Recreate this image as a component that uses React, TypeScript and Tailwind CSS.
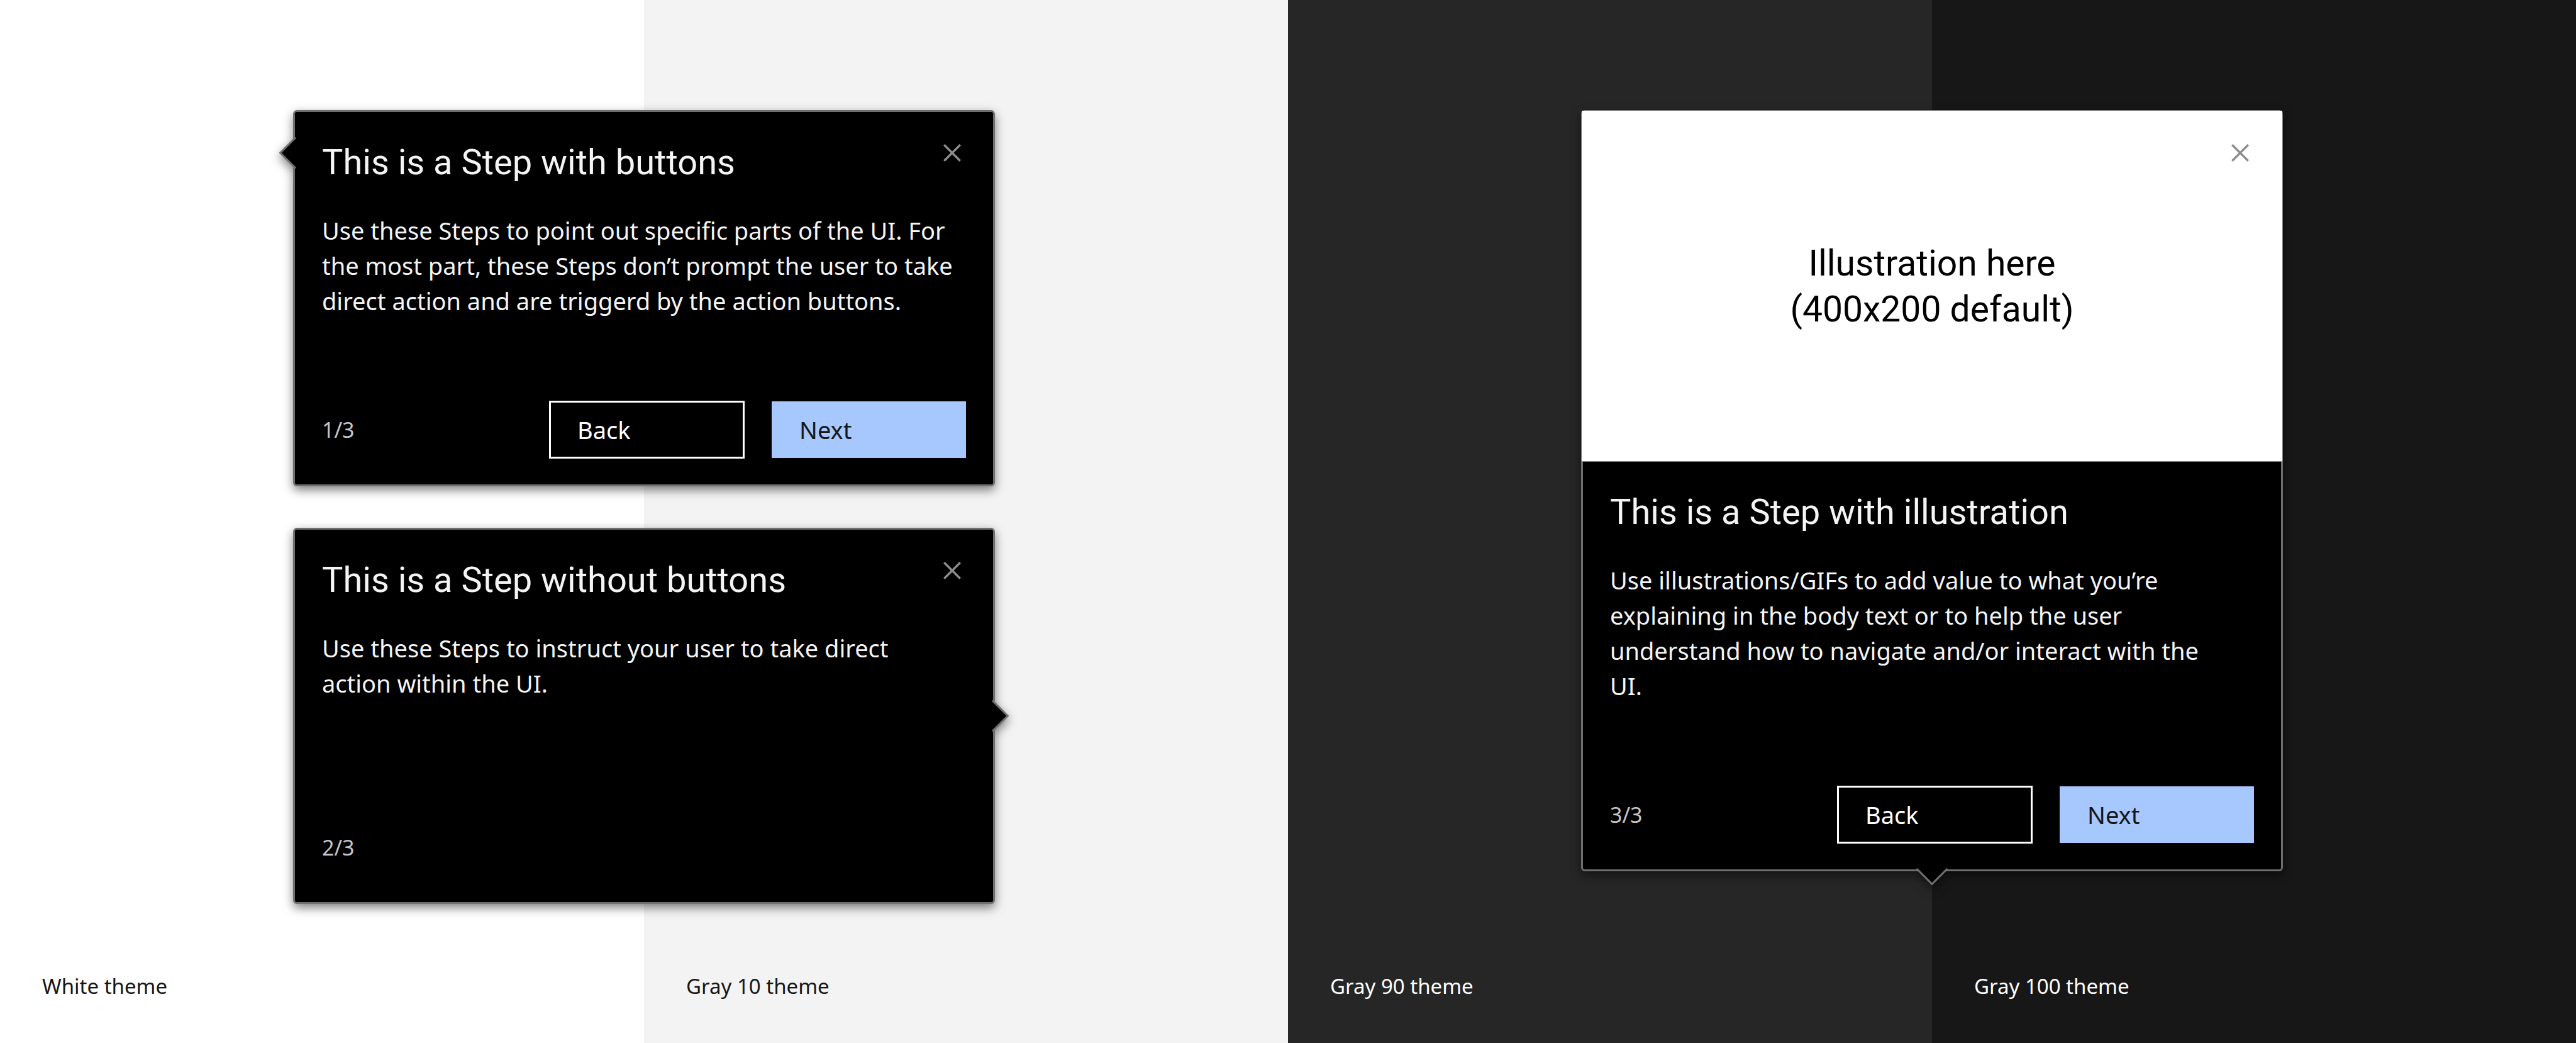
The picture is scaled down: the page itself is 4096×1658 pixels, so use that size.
import type { ReactNode } from "react";

type Arrow = "left" | "right" | "bottom";

const arrowClass: Record<Arrow, string> = {
  left: "top-[47px] -left-[18px] border-b-[3px] border-l-[3px]",
  right: "top-1/2 -right-[18px] -translate-y-1/2 border-t-[3px] border-r-[3px]",
  bottom: "-bottom-[18px] left-1/2 -translate-x-1/2 border-r-[3px] border-b-[3px]",
};

function CloseIcon() {
  return (
    <svg viewBox="0 0 32 32" className="size-14" fill="currentColor" aria-hidden="true">
      <path d="M24 9.4L22.6 8 16 14.6 9.4 8 8 9.4 14.6 16 8 22.6 9.4 24 16 17.4 22.6 24 24 22.6 17.4 16 24 9.4z" />
    </svg>
  );
}

type StepProps = {
  title: string;
  step: string;
  arrow: Arrow;
  buttons?: boolean;
  illustration?: ReactNode;
  children: ReactNode;
};

function StepCard({ title, step, arrow, buttons, illustration, children }: StepProps) {
  return (
    <article className="relative flex min-h-[598px] w-full max-w-[1116px] flex-col rounded-md border-[3px] border-[#6f6f6f] bg-black text-[#f4f4f4] drop-shadow-[0_6px_8px_rgba(0,0,0,0.5)]">
      <span className={`absolute size-9 rotate-45 border-[#6f6f6f] bg-black ${arrowClass[arrow]}`} />
      {illustration && (
        <div className="relative -mx-[2px] -mt-[2px] flex h-[558px] items-center justify-center border-b border-[#8d8d8d] bg-white text-center font-['Roboto',sans-serif] text-[57px] leading-[73px] text-black">
          {illustration}
        </div>
      )}
      <button
        type="button"
        aria-label="Close"
        className="absolute top-[37px] right-[37px] text-[#8d8d8d]"
      >
        <CloseIcon />
      </button>
      <div className="flex grow flex-col px-[43px] pt-11 pb-[42px]">
        <h2 className="font-['Roboto',sans-serif] text-[56px] leading-[72px]">{title}</h2>
        <p className={`mt-11 text-[38px] leading-[56px] ${illustration ? "pr-20" : "pr-3"}`}>{children}</p>
        <footer className="mt-auto flex items-center gap-11 pt-[132px] text-[38px]">
          <span className="mr-auto text-[34px] leading-[90px] text-[#c6c6c6]">{step}</span>
          {buttons && (
            <>
              <button
                type="button"
                className="h-[90px] w-[309px] pl-11 text-left text-white outline-[3px] -outline-offset-2 outline-white"
              >
                Back
              </button>
              <button type="button" className="h-[90px] w-[309px] bg-[#a6c8ff] pl-11 text-left text-[#161616]">
                Next
              </button>
            </>
          )}
        </footer>
      </div>
    </article>
  );
}

function ThemePair({ left, right, children }: { left: ReactNode; right: ReactNode; children: ReactNode }) {
  return (
    <section className="grid grid-cols-2 grid-rows-1">
      {left}
      {right}
      <div className="col-span-2 col-start-1 row-start-1 flex flex-col items-center gap-[66px] pt-[175px] pb-[220px]">
        {children}
      </div>
    </section>
  );
}

function Panel({ label, className }: { label: string; className: string }) {
  return (
    <div className={`row-start-1 flex items-end px-[67px] pb-[66px] text-[33px] leading-[48px] ${className}`}>
      {label}
    </div>
  );
}

export default function App() {
  return (
    <main className="grid min-h-screen grid-cols-2 font-['Noto_Sans',sans-serif]">
      <ThemePair
        left={<Panel label="White theme" className="col-start-1 bg-white text-[#161616]" />}
        right={<Panel label="Gray 10 theme" className="col-start-2 bg-[#f3f3f3] text-[#161616]" />}
      >
        <StepCard title="This is a Step with buttons" step="1/3" arrow="left" buttons>
          Use these Steps to point out specific parts of the UI. For the most part, these Steps don’t prompt the user to
          take direct action and are triggerd by the action buttons.
        </StepCard>
        <StepCard title="This is a Step without buttons" step="2/3" arrow="right">
          Use these Steps to instruct your user to take direct action within the UI.
        </StepCard>
      </ThemePair>
      <ThemePair
        left={<Panel label="Gray 90 theme" className="col-start-1 bg-[#262626] text-white" />}
        right={<Panel label="Gray 100 theme" className="col-start-2 bg-[#171717] text-white" />}
      >
        <StepCard
          title="This is a Step with illustration"
          step="3/3"
          arrow="bottom"
          buttons
          illustration={
            <p>
              Illustration here
              <br />
              (400x200 default)
            </p>
          }
        >
          Use illustrations/GIFs to add value to what you’re explaining in the body text or to help the user understand
          how to navigate and/or interact with the UI.
        </StepCard>
      </ThemePair>
    </main>
  );
}
